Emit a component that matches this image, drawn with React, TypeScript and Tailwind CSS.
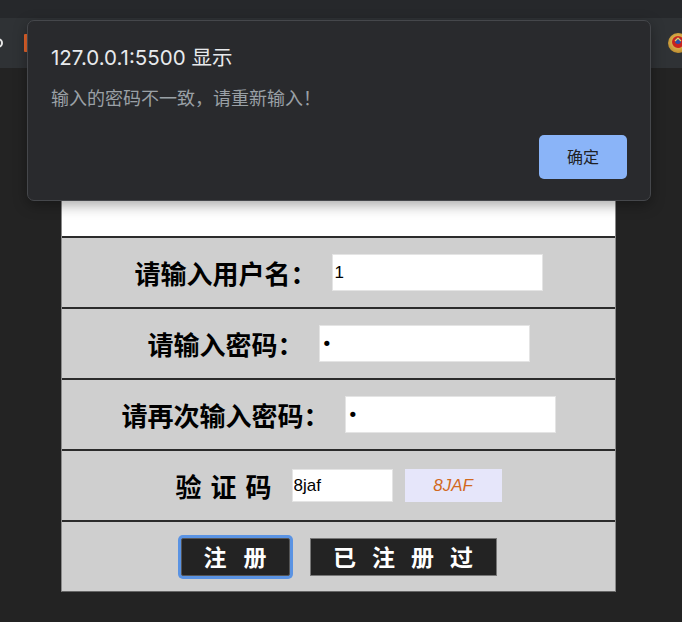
const cjk = "font-['Noto_Sans_CJK_SC',sans-serif]";

function Field({ label, type, value }: { label: string; type: string; value: string }) {
  const font =
    type === "password"
      ? "font-['DejaVu_Sans',sans-serif] text-[18px]"
      : "font-['Liberation_Sans',sans-serif] text-[17px]";
  return (
    <div className="h-[71px] border-t-2 border-[#2b2b2b] bg-[#cfcfcf] flex items-center justify-center gap-[15px]">
      <span className={`${cjk} text-[26px] font-bold text-black leading-none`}>{label}</span>
      <input
        type={type}
        defaultValue={value}
        readOnly
        className={`w-[211px] h-[37px] bg-white border border-[#e4e4e4] px-[2px] text-black outline-none ${font}`}
      />
    </div>
  );
}

export default function App() {
  return (
    <div className="relative min-h-[622px] w-[682px] overflow-hidden bg-[#232323]">
      {/* browser chrome */}
      <div className="h-[18px] bg-[#26282b]" />
      <div className="h-[50px] bg-[#2f3235] flex items-center justify-between">
        <div className="flex items-center">
          <svg width="12" height="12" viewBox="0 0 12 12" className="-ml-[8px]">
            <circle cx="6" cy="6" r="4" fill="none" stroke="#e6e6e6" strokeWidth="2" />
          </svg>
          <div className="ml-[20px] w-[5px] h-[18px] rounded-[1px] bg-[#e8652c]" />
        </div>
        <svg width="20" height="22" viewBox="0 0 20 22" className="-mr-[6px]">
          <defs>
            <radialGradient id="g" cx="50%" cy="45%" r="60%">
              <stop offset="0%" stopColor="#f6d56a" />
              <stop offset="100%" stopColor="#b8862a" />
            </radialGradient>
          </defs>
          <circle cx="10" cy="11" r="10" fill="url(#g)" />
          <circle cx="10" cy="10" r="6" fill="#c8231e" />
          <circle cx="10" cy="9" r="3" fill="#2a4fa8" />
          <path d="M7 9 L10 6 L13 9" fill="none" stroke="#f3cf5a" strokeWidth="1.2" />
        </svg>
      </div>

      {/* page */}
      <div className="pt-[20px] pl-[61px]">
        <div className="w-[555px] border-x border-[#8a8a8a] border-b border-b-[#666]">
          <div className="h-[148px] bg-white" />
          <Field label="请输入用户名：" type="text" value="1" />
          <Field label="请输入密码：" type="password" value="a" />
          <Field label="请再次输入密码：" type="password" value="a" />
          <div className="h-[71px] border-t-2 border-[#2b2b2b] bg-[#cfcfcf] flex items-center justify-center">
            <span className={`${cjk} flex gap-[9px] text-[26px] font-bold text-black leading-none`}>
              <span>验</span>
              <span>证</span>
              <span>码</span>
            </span>
            <input
              type="text"
              defaultValue="8jaf"
              readOnly
              className="ml-[20px] w-[101px] h-[33px] bg-white border border-[#e4e4e4] px-[1px] text-[17px] text-black font-['Liberation_Sans',sans-serif] outline-none"
            />
            <div className="ml-[12px] w-[97px] h-[33px] bg-[#e6e6fa] flex items-center justify-center font-['Liberation_Sans',sans-serif] italic text-[17px] text-[#d2691e]">
              8JAF
            </div>
          </div>
          <div className="h-[71px] border-t-2 border-[#2b2b2b] bg-[#cfcfcf] flex items-center justify-center gap-[20px]">
            <button className={`${cjk} w-[109px] h-[38px] bg-[#232323] border border-[#555] rounded-[2px] shadow-[0_0_0_3px_#5a93e3] flex items-center justify-center gap-[17px] text-[23px] font-bold text-white leading-none`}>
              <span>注</span>
              <span>册</span>
            </button>
            <button className={`${cjk} w-[187px] h-[38px] bg-[#232323] border border-[#777] flex items-center justify-center gap-[16px] text-[23px] font-bold text-white leading-none`}>
              <span>已</span>
              <span>注</span>
              <span>册</span>
              <span>过</span>
            </button>
          </div>
        </div>
      </div>

      {/* alert dialog */}
      <div className="absolute left-[27px] top-[20px] w-[624px] h-[181px] rounded-[7px] border border-[#45474b] bg-[#292a2d] shadow-[0_4px_14px_rgba(0,0,0,0.35)] font-['Inter','Noto_Sans_CJK_SC',sans-serif]">
        <div className="pl-[23px] pt-[23px] text-[20.5px] leading-[28px] text-[#e8eaed]">127.0.0.1:5500 显示</div>
        <div className="pl-[23px] pt-[15px] text-[18px] leading-[24px] text-[#9aa0a6]">输入的密码不一致，请重新输入！</div>
        <div className="absolute right-[23px] bottom-[21px]">
          <button className="w-[88px] h-[44px] rounded-[5px] bg-[#8ab4f8] text-[16px] text-[#202124]">确定</button>
        </div>
      </div>
    </div>
  );
}
